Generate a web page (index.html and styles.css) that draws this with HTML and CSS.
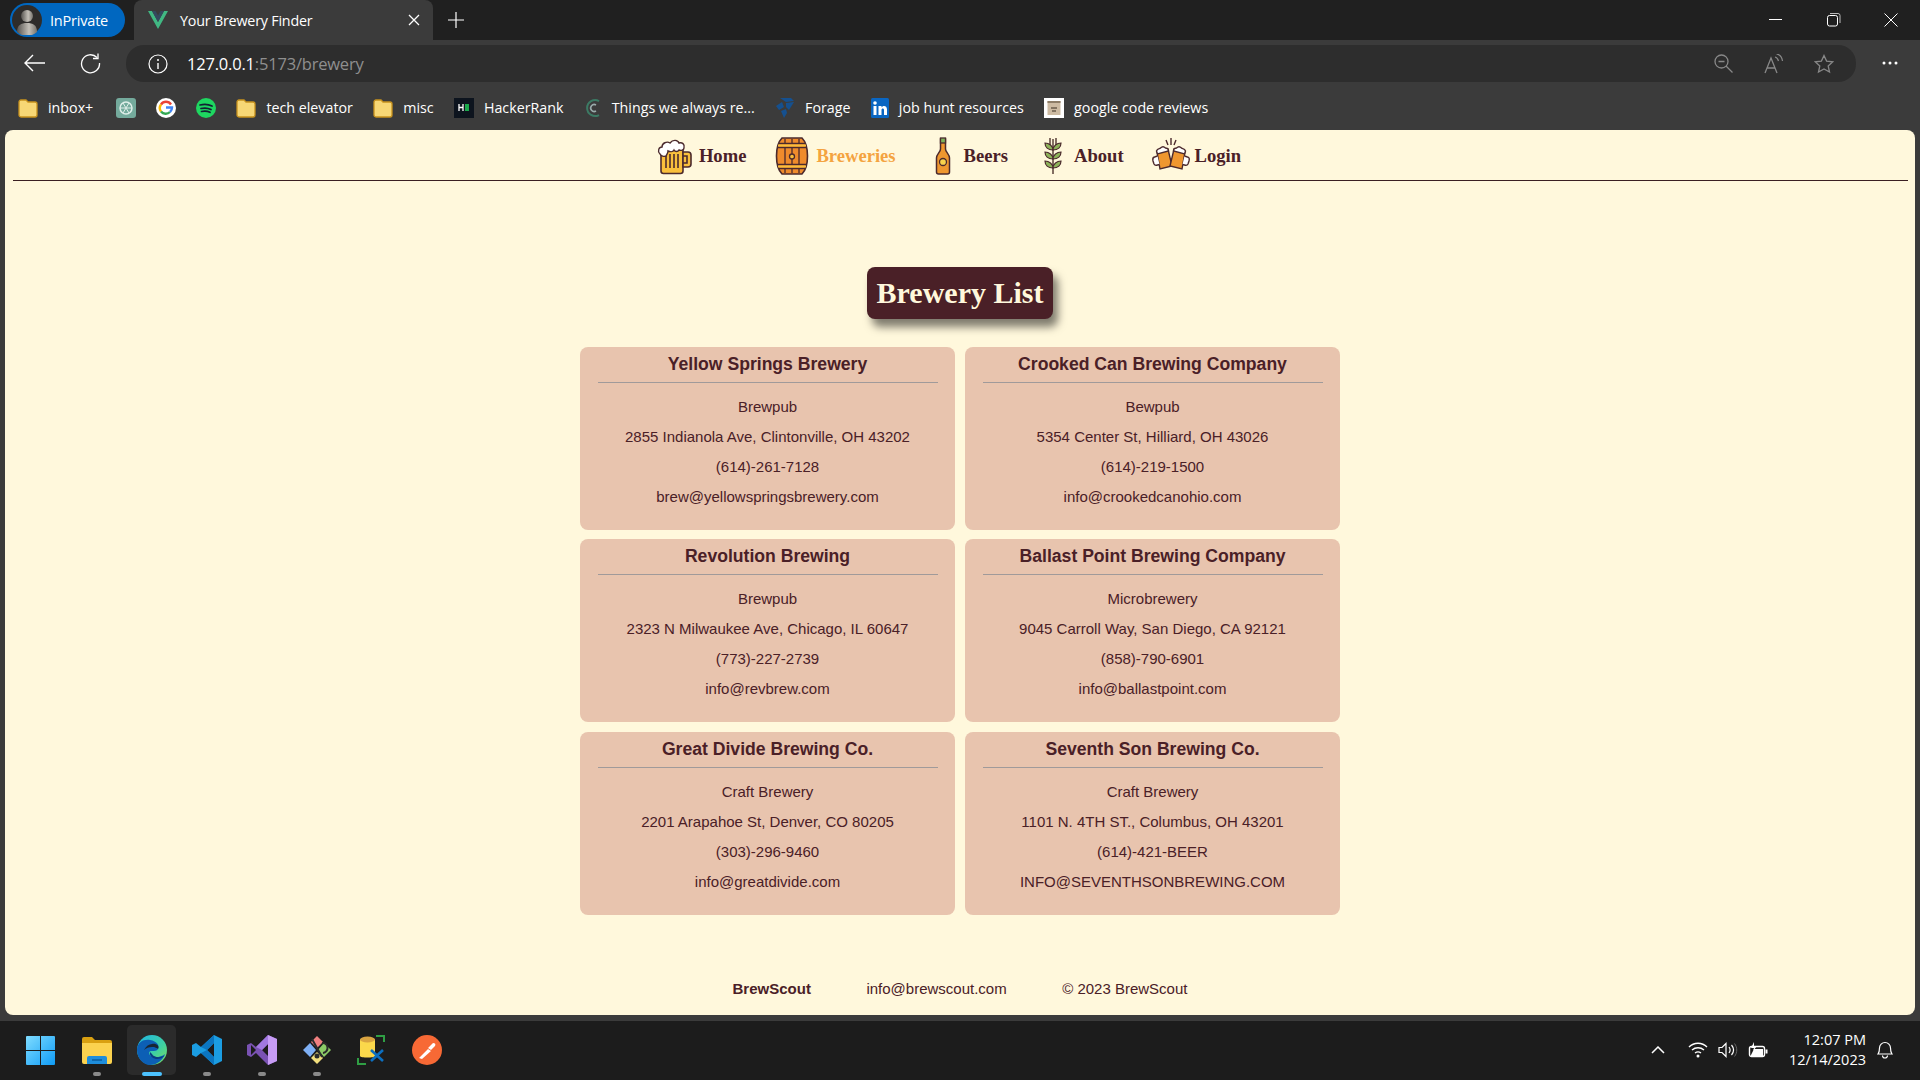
FILE: index.html
```html
<!DOCTYPE html>
<html lang="en">
<head>
<meta charset="utf-8">
<title>Your Brewery Finder</title>
<link rel="stylesheet" href="styles.css">
</head>
<body>
<div class="tabstrip">
  <div class="inprivate">
    <svg class="avatar" width="30" height="30" viewBox="0 0 30 30"><defs><linearGradient id="ag" x1="0" x2="1"><stop offset="0" stop-color="#55524e"/><stop offset=".6" stop-color="#c4c0b8"/><stop offset="1" stop-color="#77736c"/></linearGradient></defs><circle cx="15" cy="15" r="15" fill="#2e2c2a"/><circle cx="15" cy="11" r="6" fill="url(#ag)"/><path d="M5 27c0-7 4-9 10-9s10 2 10 9a15 15 0 0 1-20 0z" fill="url(#ag)"/></svg>
    <span>InPrivate</span>
  </div>
  <div class="tab">
    <svg width="20" height="18" viewBox="0 0 20 18"><path d="M0 0h4l6 11L16 0h4L10 18z" fill="#41b883"/><path d="M4 0h3.500l2.500 4.500L12.500 0H16l-6 11z" fill="#34495e"/></svg>
    <span class="tab-title">Your Brewery Finder</span>
    <svg class="tab-close" width="12" height="12" viewBox="0 0 12 12"><path d="M1 1l10 10M11 1L1 11" stroke="#fff" stroke-width="1.300"/></svg>
  </div>
  <svg class="newtab" width="16" height="16" viewBox="0 0 16 16"><path d="M8 0v16M0 8h16" stroke="#fff" stroke-width="1.200"/></svg>
  <div class="winctl">
    <svg width="14" height="14" viewBox="0 0 14 14"><path d="M0 6.500h13" stroke="#fff"/></svg>
    <svg width="14" height="14" viewBox="0 0 14 14"><rect x=".5" y="2.500" width="10" height="10.500" rx="2" fill="none" stroke="#fff"/><path d="M3 .5h8a2 2 0 0 1 2 2V10" fill="none" stroke="#bbb"/></svg>
    <svg width="14" height="14" viewBox="0 0 14 14"><path d="M.5.5l13 13M13.500.5l-13 13" stroke="#fff"/></svg>
  </div>
</div>

<div class="toolbar">
  <svg class="tool-back" width="21" height="18" viewBox="0 0 21 18"><path d="M21 9H1M9 1L1 9l8 8" fill="none" stroke="#fff" stroke-width="1.400"/></svg>
  <svg class="tool-reload" width="21" height="21" viewBox="0 0 21 21"><path d="M17 4.500A9 9 0 1 0 19.500 10" fill="none" stroke="#fff" stroke-width="1.300"/><path d="M18 .5v5h-5" fill="none" stroke="#fff" stroke-width="1.300"/></svg>
  <div class="address">
    <svg width="20" height="20" viewBox="0 0 20 20"><circle cx="10" cy="10" r="9" fill="none" stroke="#fff" stroke-width="1.200"/><path d="M10 9v6" stroke="#fff" stroke-width="1.400"/><circle cx="10" cy="6" r="1" fill="#fff"/></svg>
    <span class="url"><span class="url-host">127.0.0.1</span>:5173/brewery</span>
    <div class="addr-icons">
      <svg width="19" height="20" viewBox="0 0 19 20"><circle cx="7.500" cy="7.500" r="6.500" fill="none" stroke="#888" stroke-width="1.300"/><path d="M4.500 7.500h6M12 12l6.500 6.500" stroke="#888" stroke-width="1.300"/></svg>
      <svg width="20" height="20" viewBox="0 0 20 20"><path d="M1 19L7 4l6 15M3.500 14h7" fill="none" stroke="#888" stroke-width="1.300"/><path d="M11 3c2 .5 3 2 3.500 4M12.500 0c3 .5 5.500 3.500 6 7" fill="none" stroke="#888" stroke-width="1.200"/></svg>
      <svg width="20" height="20" viewBox="0 0 20 20"><path d="M10 1.500l2.600 5.600 6.200.7-4.600 4.200 1.300 6.100L10 15l-5.500 3.100 1.300-6.100L1.200 7.800l6.200-.7z" fill="none" stroke="#888" stroke-width="1.300"/></svg>
    </div>
  </div>
  <svg class="tool-more" width="16" height="4" viewBox="0 0 16 4"><circle cx="2" cy="2" r="1.500" fill="#fff"/><circle cx="8" cy="2" r="1.500" fill="#fff"/><circle cx="14" cy="2" r="1.500" fill="#fff"/></svg>
</div>

<div class="bookmarks">
  <div class="bm bm-first"><svg width="20" height="20" viewBox="0 0 20 20"><use href="#folder"/></svg><span>inbox+</span></div>
  <div class="bm"><svg width="20" height="20" viewBox="0 0 20 20"><rect width="20" height="20" rx="3" fill="#74aa9c"/><circle cx="10" cy="10" r="6" fill="none" stroke="#dfeee9" stroke-width="1.500"/><path d="M7 5l6 10M13 5L7 15M4 10h12" stroke="#dfeee9"/></svg></div>
  <div class="bm"><svg width="20" height="20" viewBox="0 0 20 20"><circle cx="10" cy="10" r="10" fill="#fff"/><path d="M15 6.500A6 6 0 0 0 5 6.500" fill="none" stroke="#ea4335" stroke-width="2.400"/><path d="M5 6.500a6 6 0 0 0 0 7" fill="none" stroke="#fbbc05" stroke-width="2.400"/><path d="M5 13.500a6 6 0 0 0 9 .5" fill="none" stroke="#34a853" stroke-width="2.400"/><path d="M14 14a6 6 0 0 0 2-4.500h-6" fill="none" stroke="#4285f4" stroke-width="2.400"/></svg></div>
  <div class="bm"><svg width="20" height="20" viewBox="0 0 20 20"><circle cx="10" cy="10" r="10" fill="#1ed760"/><path d="M4 7c4-1 8-1 12 1M5 10.500c3.500-.8 7-.6 10 1M5.500 13.500c3-.6 6-.4 8.500 .8" fill="none" stroke="#123" stroke-width="1.700" stroke-linecap="round"/></svg></div>
  <div class="bm"><svg width="20" height="20" viewBox="0 0 20 20"><use href="#folder"/></svg><span>tech elevator</span></div>
  <div class="bm"><svg width="20" height="20" viewBox="0 0 20 20"><use href="#folder"/></svg><span>misc</span></div>
  <div class="bm"><svg width="20" height="20" viewBox="0 0 20 20"><rect width="20" height="20" fill="#0d141e"/><rect x="11" y="6" width="4" height="7" fill="#1ba94c"/><path d="M5 6v7M9 6v7M5 9.500h4" stroke="#fff" stroke-width="1.300"/></svg><span>HackerRank</span></div>
  <div class="bm"><svg width="18" height="20" viewBox="0 0 18 20"><path d="M15 3a8 8 0 1 0 0 14" fill="none" stroke="#3c7a64" stroke-width="2"/><path d="M12 7a3.500 3.500 0 1 0 0 6" fill="none" stroke="#9aa" stroke-width="1.600"/></svg><span>Things we always re...</span></div>
  <div class="bm"><svg width="20" height="20" viewBox="0 0 20 20"><path d="M5 0h11l3 3-8 1zM1 8l6-4 2 5-5 3zM11 5l8-1-5 8-3-3zM6 13l5-2 1 4-3 5z" fill="#15508f"/></svg><span>Forage</span></div>
  <div class="bm"><svg width="18" height="20" viewBox="0 0 18 20"><rect width="18" height="20" rx="1.500" fill="#0a66c2"/><rect x="2.500" y="8" width="3" height="9" fill="#fff"/><circle cx="4" cy="5" r="1.800" fill="#fff"/><path d="M7.500 8h3v1.500c1.500-2.500 5.500-2 5.500 2V17h-3v-5c0-2-2.500-2-2.500 0v5h-3z" fill="#fff"/></svg><span>job hunt resources</span></div>
  <div class="bm"><svg width="20" height="20" viewBox="0 0 20 20"><rect width="20" height="20" fill="#fff"/><rect x="3.500" y="3" width="13" height="14" fill="#cdbba3"/><rect x="3.500" y="3" width="13" height="2" fill="#8d7d68"/><path d="M7 10h6M8 13h4" stroke="#6a5c4c" stroke-width="1.500"/></svg><span>google code reviews</span></div>
</div>

<svg class="defs" width="0" height="0"><defs><g id="folder"><path d="M1 4a2 2 0 0 1 2-2h5l2 2h7a2 2 0 0 1 2 2v11a2 2 0 0 1-2 2H3a2 2 0 0 1-2-2z" fill="#f7d775" stroke="#c8921d" stroke-width="1.300"/></g></defs></svg>

<div class="page">
  <nav class="nav">
    <a class="nav-item"><svg class="nav-icon" width="40" height="38" viewBox="0 0 40 38"><g transform="translate(-2 0)"><path d="M8 12h22v22a2.500 2.500 0 0 1-2.500 2.500h-17A2.500 2.500 0 0 1 8 34z" fill="#f9bf3c" stroke="#4b2a2d" stroke-width="1.600"/><path d="M30 15h5a3 3 0 0 1 3 3v9a3 3 0 0 1-3 3h-5zM30 19h4v7h-4z" fill="#f9bf3c" stroke="#4b2a2d" stroke-width="1.600"/><path d="M13 17v14M17 17v14M21 17v14M25 17v14" stroke="#4b2a2d" stroke-width="1.600"/><path d="M7 17c-3-3-1-7 2-7 0-4 5-6 8-4 3-4 8-3 9 0 3-1 6 1 5 5 0 2-3 3-5 2-1 2-4 2-5 0-1 2-4 2-6 1 0 2-1 3-2 5-2 1-5 0-6-2z" fill="#fff" stroke="#4b2a2d" stroke-width="1.400"/></g></svg><span>Home</span></a>
    <a class="nav-item active"><svg class="nav-icon" width="40" height="38" viewBox="0 0 40 38"><path d="M10 1h20c4 4 5.500 11 5.500 18s-1.500 14-5.500 18H10c-4-4-5.500-11-5.500-18S6 5 10 1z" fill="#ef8b2c" stroke="#4b2a2d" stroke-width="1.600"/><path d="M7 6.500h26M5 10.500h30M5 27.500h30M7 31.500h26" stroke="#4b2a2d" stroke-width="1.300"/><path d="M6 8.500h28M6 29.500h28" stroke="#f9bf3c" stroke-width="1.800"/><path d="M13 2v4M20 2v4M27 2v4M13 32v4M20 32v4M27 32v4M13 11v16M27 11v16M20 11v6M20 22v5" stroke="#4b2a2d" stroke-width="1.300"/><circle cx="20" cy="19.500" r="2.500" fill="#f9bf3c" stroke="#4b2a2d" stroke-width="1.300"/></svg><span>Breweries</span></a>
    <a class="nav-item"><svg class="nav-icon" width="40" height="38" viewBox="0 0 40 38"><g transform="translate(3 0)"><path d="M17.500 2h5v10c0 3 4 5 4 9v14a2 2 0 0 1-2 2h-9a2 2 0 0 1-2-2V21c0-4 4-6 4-9z" fill="#ef972f" stroke="#4b2a2d" stroke-width="1.500"/><rect x="17.500" y="1" width="5" height="5" fill="#7eb25a" stroke="#4b2a2d" stroke-width="1.300"/><circle cx="20" cy="25" r="3.500" fill="#f9d24c" stroke="#4b2a2d" stroke-width="1.300"/></g></svg><span>Beers</span></a>
    <a class="nav-item"><svg class="nav-icon" width="40" height="38" viewBox="0 0 40 38"><g transform="translate(3 0)"><path d="M20 2v35M17 1v7M23 1v7" stroke="#5a4038" stroke-width="1.500"/><g fill="#8db35a" stroke="#4b2a2d" stroke-width="1.200"><path d="M20 13c-5 0-8-3-8-7 4 0 8 3 8 7z"/><path d="M20 13c5 0 8-3 8-7-4 0-8 3-8 7z"/><path d="M20 22c-5 0-8-3-8-7 4 0 8 3 8 7z"/><path d="M20 22c5 0 8-3 8-7-4 0-8 3-8 7z"/><path d="M20 31c-5 0-8-3-8-7 4 0 8 3 8 7z"/><path d="M20 31c5 0 8-3 8-7-4 0-8 3-8 7z"/></g></g></svg><span>About</span></a>
    <a class="nav-item"><svg class="nav-icon" width="40" height="38" viewBox="0 0 40 38"><g stroke="#4b2a2d" stroke-width="1.400"><path d="M6 15l11-3 4 17-12 3z" fill="#ef972f"/><path d="M5.500 14c1-3 3-2 4-3 2-2 4-1 5 0 2 0 3 1 3 3l-11 3z" fill="#fff"/><path d="M6.500 19l-3 1c-2 .5-2 2-1.500 4l1 3c.5 1 2 1.500 3.500 1l2-.5" fill="#fff"/><path d="M34 15l-11-3-4 17 12 3z" fill="#ef972f"/><path d="M34.500 14c-1-3-3-2-4-3-2-2-4-1-5 0-2 0-3 1-3 3l11 3z" fill="#fff"/><path d="M33.500 19l3 1c2 .5 2 2 1.500 4l-1 3c-.5 1-2 1.500-3.500 1l-2-.5" fill="#fff"/><path d="M20 1v7M15 3l2 5M25 3l-2 5" fill="none"/></g></svg><span>Login</span></a>
  </nav>

  <h1 class="title">Brewery List</h1>

  <section class="grid">
    <article class="card"><h2>Yellow Springs Brewery</h2><p>Brewpub</p><p>2855 Indianola Ave, Clintonville, OH 43202</p><p>(614)-261-7128</p><p>brew@yellowspringsbrewery.com</p></article>
    <article class="card"><h2>Crooked Can Brewing Company</h2><p>Bewpub</p><p>5354 Center St, Hilliard, OH 43026</p><p>(614)-219-1500</p><p>info@crookedcanohio.com</p></article>
    <article class="card"><h2>Revolution Brewing</h2><p>Brewpub</p><p>2323 N Milwaukee Ave, Chicago, IL 60647</p><p>(773)-227-2739</p><p>info@revbrew.com</p></article>
    <article class="card"><h2>Ballast Point Brewing Company</h2><p>Microbrewery</p><p>9045 Carroll Way, San Diego, CA 92121</p><p>(858)-790-6901</p><p>info@ballastpoint.com</p></article>
    <article class="card"><h2>Great Divide Brewing Co.</h2><p>Craft Brewery</p><p>2201 Arapahoe St, Denver, CO 80205</p><p>(303)-296-9460</p><p>info@greatdivide.com</p></article>
    <article class="card"><h2>Seventh Son Brewing Co.</h2><p>Craft Brewery</p><p>1101 N. 4TH ST., Columbus, OH 43201</p><p>(614)-421-BEER</p><p>INFO@SEVENTHSONBREWING.COM</p></article>
  </section>

  <footer class="footer"><strong>BrewScout</strong><span>info@brewscout.com</span><span>© 2023 BrewScout</span></footer>
</div>

<div class="taskbar">
  <div class="task task-start"><svg width="29" height="29" viewBox="0 0 29 29"><defs><linearGradient id="wg" x1="0" y1="0" x2="1" y2="1"><stop offset="0" stop-color="#7fdcff"/><stop offset="1" stop-color="#0f9bf5"/></linearGradient></defs><path d="M0 1a1 1 0 0 1 1-1h13v14H0zM15 0h13a1 1 0 0 1 1 1v13H15zM0 15h14v14H1a1 1 0 0 1-1-1zM15 15h14v13a1 1 0 0 1-1 1H15z" fill="url(#wg)"/></svg></div>
  <div class="task has-dot"><svg width="30" height="27" viewBox="0 0 30 27"><path d="M0 2a2 2 0 0 1 2-2h8l3 3h15a2 2 0 0 1 2 2v3H0z" fill="#d9a011"/><path d="M0 6h30v19a2 2 0 0 1-2 2H2a2 2 0 0 1-2-2z" fill="#fbd24f"/><path d="M5 27v-6a2 2 0 0 1 2-2h16a2 2 0 0 1 2 2v6z" fill="#1e8ddb"/><path d="M10 23h10" stroke="#0b5c9e" stroke-width="1.500"/></svg></div>
  <div class="task task-active"><svg width="30" height="30" viewBox="0 0 30 30"><defs><linearGradient id="eg" x1="0" y1="0" x2="1" y2="1"><stop offset="0" stop-color="#1fb6e6"/><stop offset=".6" stop-color="#3fd0a0"/><stop offset="1" stop-color="#7fe05a"/></linearGradient></defs><circle cx="15" cy="15" r="15" fill="url(#eg)"/><path d="M0 15C0 7 7 4 13 5c7 1 10 6 8 9-1 2-4 2-6 2-3 0-4 2-2 4 3 3 10 3 15-1-2 6-8 11-15 11C6 30 0 23 0 15z" fill="#0c5fb5"/><path d="M13 17c-1 3 2 6 6 7 3 .5 7-1 9-4-3 3-11 3-13-1z" fill="#0a3c80"/><path d="M15 12c2 0 6 1 6 2 2-3-2-6-6-5-3 0-6 2-8 6 2-2 5-3 8-3z" fill="#1c1c1c" opacity=".85"/></svg></div>
  <div class="task has-dot"><svg width="30" height="30" viewBox="0 0 30 30"><path d="M22 0l8 4v22l-8 4-13-12-5 4-4-2V10l4-2 5 4zM22 8l-7 7 7 7z" fill="#1b9de2"/><path d="M22 0v8l-7 7L9 12 22 0zM9 18l6-3 7 7v8z" fill="#0b75c0"/></svg></div>
  <div class="task has-dot"><svg width="30" height="30" viewBox="0 0 30 30"><path d="M21 0l9 4v22l-9 4-12-12-5 4-4-2V10l4-2 5 4z" fill="#7a52b3"/><path d="M21 0l9 4v22l-9 4z" fill="#c79cf5"/><path d="M4 10l5 5-5 5zM21 9l-6 6 6 6z" fill="#1c1c1c"/><path d="M9 12l12-12v9l-6 6z" fill="#a178e0"/></svg></div>
  <div class="task has-dot"><svg width="30" height="30" viewBox="0 0 30 30"><path d="M15 1l6 6-6 6-6-6z" fill="#f08080"/><path d="M1 15l7-7 6 7-6 7z" fill="#7fb0f5"/><path d="M29 15l-7-7-6 7 6 7z" fill="#8ccb66"/><path d="M15 29l6-6-6-6-6 6z" fill="#f2de7c"/><path d="M10 4l10 18M20 8a4 4 0 1 1 1 10" fill="none" stroke="#2b2b2b" stroke-width="2"/><circle cx="15" cy="21" r="2.500" fill="#2b2b2b"/></svg></div>
  <div class="task"><svg width="30" height="30" viewBox="0 0 30 30"><path d="M19 1h8v6M1 23v6h8" fill="none" stroke="#2f9e44" stroke-width="2"/><path d="M3 5c0-3 15-3 15 0v16c0 2-15 2-15 0z" fill="#fbd84b"/><ellipse cx="10.500" cy="4.500" rx="7.500" ry="3" fill="#d9a441"/><path d="M14 15l12 11M26 15L14 26" stroke="#0c6fc0" stroke-width="2.600"/></svg></div>
  <div class="task"><svg width="30" height="30" viewBox="0 0 30 30"><circle cx="15" cy="15" r="15" fill="#f76935"/><path d="M7 23l9-9 3 2-9 8zM16 13l5-5c2 0 3 1 2 3l-4 4z" fill="#fff"/></svg></div>
  <div class="tray">
    <svg width="14" height="8" viewBox="0 0 14 8"><path d="M1 7l6-6 6 6" fill="none" stroke="#fff" stroke-width="1.500"/></svg>
    <svg width="20" height="16" viewBox="0 0 20 16"><path d="M1 5c5-5 13-5 18 0M4 8c3.500-3 8.500-3 12 0M7 11c2-1.500 4-1.500 6 0" fill="none" stroke="#fff" stroke-width="1.400"/><circle cx="10" cy="14" r="1.500" fill="#fff"/></svg>
    <svg width="20" height="16" viewBox="0 0 20 16"><path d="M1 5.500h3l4-4v13l-4-4H1z" fill="none" stroke="#fff" stroke-width="1.200"/><path d="M11 5c1.500 2 1.500 4 0 6M13.500 3c2.500 3 2.500 7 0 10" fill="none" stroke="#fff" stroke-width="1.200"/><path d="M16.500 1.500c3 4 3 9 0 13" fill="none" stroke="#666" stroke-width="1"/></svg>
    <svg width="20" height="16" viewBox="0 0 20 16"><rect x="1.500" y="4.500" width="15" height="10" rx="2" fill="none" stroke="#fff" stroke-width="1.400"/><path d="M3 13l3-6h9v7H3z" fill="#fff"/><rect x="17.500" y="7.500" width="2" height="4" fill="#fff"/><path d="M6 0L3 6h3L5 9l4-5H6z" fill="#fff"/></svg>
    <div class="clock"><span>12:07 PM</span><span>12/14/2023</span></div>
    <svg width="16" height="18" viewBox="0 0 16 18"><path d="M1 13c1.500-2 1.500-3 1.500-6a5.500 5.500 0 0 1 11 0c0 3 0 4 1.500 6zM5.500 14.500a2.500 2.500 0 0 0 5 0" fill="none" stroke="#fff" stroke-width="1.200"/></svg>
  </div>
</div>
</body>
</html>
```

FILE: styles.css
```css
* { box-sizing: border-box; }
html, body { margin: 0; padding: 0; }
body {
  width: 1920px;
  height: 1080px;
  overflow: hidden;
  background: #3b3b3b;
  display: flex;
  flex-direction: column;
  font-family: "Liberation Sans", Arial, sans-serif;
  color: #4a2027;
}
svg { display: block; flex: none; }
.defs { position: absolute; }

.tabstrip {
  height: 40px;
  background: #202020;
  display: flex;
  align-items: center;
  padding-left: 10px;
  font-family: "Open Sans", sans-serif;
  color: #fff;
}
.inprivate {
  width: 115px;
  height: 34px;
  border-radius: 17px;
  background: #0067c0;
  display: flex;
  align-items: center;
  gap: 8px;
  padding-left: 2px;
  font-size: 14.500px;
  letter-spacing: -.2px;
  margin-right: 9px;
}
.tab {
  width: 299px;
  height: 40px;
  background: #3b3b3b;
  border-radius: 8px 8px 0 0;
  display: flex;
  align-items: center;
  padding-left: 14px;
}
.tab-title { margin-left: 12px; font-size: 14.300px; letter-spacing: -.2px; flex: 1; }
.tab-close { margin-right: 13px; }
.newtab { margin-left: 15px; }
.winctl {
  margin-left: auto;
  display: flex;
  gap: 43.500px;
  padding-right: 22px;
}

.toolbar {
  height: 42px;
  display: flex;
  align-items: flex-end;
  font-family: "Open Sans", sans-serif;
  position: relative;
}
.tool-back { margin: 0 0 10px 24px; }
.tool-reload { margin: 0 0 8px 35px; }
.tool-more { margin: 0 0 17px 26px; }
.address {
  width: 1730px;
  height: 37px;
  margin-left: 25px;
  background: #2d2d2d;
  border-radius: 18px;
  display: flex;
  align-items: center;
  padding-left: 22px;
}
.url { margin-left: 19px; font-size: 16.500px; letter-spacing: -.2px; line-height: 20px; color: #8f8f8f; }
.url-host { color: #fff; }
.addr-icons {
  margin-left: auto;
  display: flex;
  gap: 30.500px;
  padding-right: 22px;
}

.bookmarks {
  height: 48px;
  padding: 3px 0 0 18px;
  display: flex;
  align-items: center;
  gap: 20.300px;
  font-family: "Open Sans", sans-serif;
  font-size: 14.250px;
  color: #fff;
}
.bm { display: flex; align-items: center; gap: 10px; }
.bm-first { margin-right: 2px; }

.page {
  width: 1910px;
  height: 885px;
  margin-left: 5px;
  background: #fff8dc;
  border-radius: 8px;
  display: flex;
  flex-direction: column;
  align-items: center;
}
.nav {
  align-self: stretch;
  height: 50.500px;
  margin: 0 7px 0 8px;
  border-bottom: 1px solid #3a1f22;
  display: flex;
  justify-content: center;
  align-items: center;
  gap: 26px;
  padding: 3px 25px 0 0;
  font-family: "Liberation Serif", serif;
  font-weight: bold;
  font-size: 18.600px;
}
.nav-item { display: flex; align-items: center; gap: 4px; color: #4a2027; }
.nav-item.active { color: #f4a340; }
.nav-item:nth-child(3) { margin-left: -2px; }
.nav-item:nth-child(4) { margin-left: -4px; }
.nav-item:nth-child(5) { margin-left: 1px; }

.title {
  margin: 86px 0 28px;
  height: 52px;
  line-height: 52px;
  padding: 0 9.500px;
  border-radius: 8px;
  background: #4a2027;
  color: #fff8dc;
  font-family: "Liberation Serif", serif;
  font-weight: bold;
  font-size: 30px;
  box-shadow: 5px 8px 8px rgba(0, 0, 0, .5);
}

.grid {
  display: grid;
  grid-template-columns: 375px 375px;
  gap: 9.500px 10px;
}
.card {
  height: 183px;
  background: #e8c4ae;
  border-radius: 8px;
  text-align: center;
  padding: 0 17.500px;
}
.card h2 {
  margin: 0 0 9px;
  height: 36px;
  line-height: 34px;
  font-size: 17.600px;
  font-weight: bold;
  border-bottom: 1px solid #a09a9a;
}
.card p {
  margin: 0;
  height: 30px;
  line-height: 30px;
  font-size: 15px;
}

.footer {
  margin-top: 65px;
  display: flex;
  gap: 55.500px;
  font-size: 15px;
  line-height: 17px;
}

.taskbar {
  margin-top: 6px;
  height: 59px;
  padding: 0 0 1px 14px;
  background: #1c1c1c;
  display: flex;
  align-items: center;
  color: #fff;
  font-family: "Open Sans", sans-serif;
}
.task {
  position: relative;
  width: 55px;
  height: 50px;
  display: flex;
  align-items: center;
  justify-content: center;
  border-radius: 5px;
}
.task-start svg { margin-left: -2px; }
.task-active { background: #2b2b2b; width: 49px; margin: 0 3px; }
.has-dot::after {
  content: "";
  position: absolute;
  left: 50%;
  bottom: -1px;
  width: 8px;
  height: 4px;
  margin-left: -4px;
  border-radius: 2px;
  background: #8a8a8a;
}
.task-active::after {
  content: "";
  position: absolute;
  left: 50%;
  bottom: -1px;
  width: 20px;
  height: 4px;
  margin-left: -10px;
  border-radius: 2px;
  background: #4cc2ff;
}
.tray {
  margin-left: auto;
  display: flex;
  align-items: center;
  padding-right: 27px;
  gap: 10px;
}
.tray svg:first-child { margin-right: 13px; }
.clock {
  display: flex;
  flex-direction: column;
  align-items: flex-end;
  width: 88px;
  margin-right: 1px;
  font-size: 14.500px;
  line-height: 20px;
}
```
